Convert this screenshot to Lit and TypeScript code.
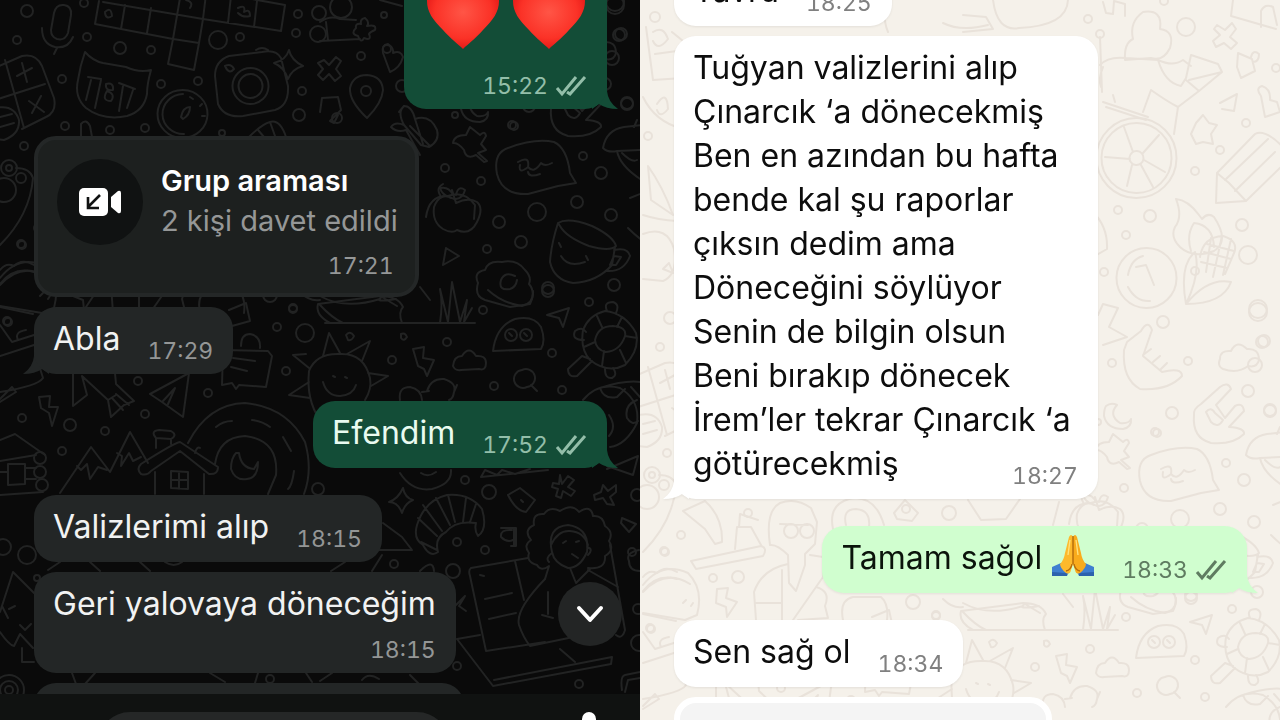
import { LitElement, html, svg, css } from "lit";
import { customElement, property } from "lit/decorators.js";

/* Small rings scattered over the wallpaper: x, y, radius */
const RINGS: number[][] = [
  [27, 11, 6], [84, 3, 4], [87, 37, 4], [17, 40, 4], [120, 48, 6], [151, 50, 4], [218, 40, 9], [240, 37, 4],
  [298, 14, 4], [296, 33, 4], [319, 13, 7], [318, 34, 8], [62, 79, 4], [161, 84, 4], [198, 81, 4], [302, 91, 4],
  [299, 115, 6], [65, 126, 4], [110, 130, 4], [145, 128, 4], [24, 146, 4], [222, 133, 3], [22, 245, 4],
  [9, 168, 8], [9, 168, 3], [21, 178, 5], [4, 190, 12], [341, 7, 11], [384, 15, 3], [361, 56, 4], [366, 91, 5],
  [387, 49, 4], [337, 118, 5], [445, 168, 4], [481, 181, 4], [499, 222, 6], [521, 242, 6], [487, 249, 4],
  [514, 126, 4], [455, 115, 3], [583, 156, 4], [601, 173, 6], [577, 202, 6], [611, 215, 6], [614, 285, 6],
  [548, 288, 6], [537, 212, 9], [621, 34, 6], [627, 104, 6], [612, 58, 7], [615, 5, 9], [402, 86, 6],
  [70, 425, 6], [105, 431, 4], [62, 451, 4], [145, 414, 4], [138, 381, 4], [208, 393, 4], [286, 371, 4],
  [277, 327, 4], [293, 309, 4], [305, 333, 9], [22, 418, 4], [8, 322, 4], [40, 458, 6], [40, 472, 6], [42, 485, 6],
  [318, 489, 6], [392, 360, 4], [447, 342, 4], [483, 310, 4], [589, 302, 4], [552, 353, 4], [494, 386, 4],
  [562, 390, 4], [548, 291, 6], [465, 480, 4], [489, 492, 7], [637, 495, 6], [511, 335, 6], [526, 335, 6],
  [27, 555, 9], [3, 547, 8], [457, 542, 4], [485, 550, 4], [453, 571, 7], [394, 564, 4], [457, 666, 4],
  [579, 684, 4], [638, 609, 5], [639, 643, 8], [9, 690, 9], [9, 690, 15], [9, 690, 4], [270, 679, 4],
  [632, 552, 4], [37, 578, 3],
  [445, -288, 4], [457, -273, 4], [521, -306, 4], [543, -280, 9], [633, -239, 4], [603, -184, 4],
  [577, -157, 4], [552, -136, 4], [475, -97, 4], [507, -91, 6], [483, -72, 4], [599, -82, 6], [605, -52, 9],
  [552, -36, 4], [461, -35, 4], [615, 2, 9], [520, 15, 6], [619, 35, 6], [469, 56, 4], [545, 54, 4],
  [605, 84, 6], [627, 103, 6], [529, 106, 6], [512, 125, 4], [38, 228, 4], [21, 244, 4], [70, 271, 4],
  [95, 270, 6], [105, 206, 4], [270, 295, 7], [293, 308, 4], [306, 206, 7], [263, 202, 4], [12, -290, 5],
  [5, -171, 4], [7, 321, 4],
];

/* Hand-drawn doodles of the wallpaper */
const DOODLES: string[] = [
  // microphone
  "M54 13Q56 4 64 5Q72 6 71 15L68 33Q65 41 57 39Q51 37 51 30ZM42 28Q42 44 55 47Q68 49 73 37M57 48L54 54",
  // word tiles
  "M99 1L95 24L173 39L168 64L194 70L199 43L203 19L281 31L285 5L230 -5M103 2L203 19M125 5L121 29M151 8L147 33M180 -2L173 39L199 43M206 -6L203 19M231 -4L228 23M257 1L254 27M105 12Q111 6 112 16Q106 20 105 13M186 0Q194 2 190 8M238 8Q246 4 244 12Q250 8 250 16Q243 18 238 13",
  // calculator
  "M-10 70L22 56Q36 53 42 66L54 98Q57 112 46 117L22 129M5 60L24 128M-5 100L45 84M17 76L32 68M22 63L27 82M29 101L44 112M41 96L32 113M-4 108Q14 104 19 120Q20 134 4 140L-6 139M0 117L12 114M0 127L14 123",
  // cat face
  "M78 80Q80 66 85 52Q93 61 103 63L126 67Q139 73 151 70Q147 84 147 94Q144 111 127 116Q103 121 86 108Q74 97 78 80M88 77L101 79M91 80L86 100M101 80L95 108M106 84Q114 82 113 90Q105 91 106 84M107 91Q101 101 111 101Q116 94 107 91M119 83L135 89M123 86L119 111M133 90L127 108",
  // stopwatch
  "M183 90A25 24 0 1 1 182 138A25 24 0 1 1 183 90M183 94A21 20 0 1 0 184 134M181 117Q183 107 190 107Q190 115 183 119ZM190 97L193 99M200 106L202 104M202 116H205",
  // camera and sparkle
  "M215 76Q215 61 229 56L262 52Q276 49 281 58L288 86Q289 106 275 110L243 116Q224 118 218 104ZM251 68A18 18 0 1 1 250 104A18 18 0 1 1 251 68M251 74A12 12 0 1 1 250 98A12 12 0 1 1 251 74M256 50Q262 46 268 50M225 66Q231 63 234 69Q229 75 225 66M289 50Q291 60 303 66Q292 69 288 79Q284 67 274 63Q286 60 289 50",
  "M81 137V124Q86 118 90 126L92 137M249 137Q262 124 270 122Q280 119 286 137M270 122L275 136M258 130L264 137",
  // pencil stroke on the left edge
  "M16 168Q30 168 33 178Q30 215 0 245M0 270Q6 262 14 266Q22 258 34 265M0 284Q14 266 34 272",
  // bouquet and cross
  "M320 22Q330 15 340 19L356 20M320 41L360 39M326 22L328 40M365 18Q370 22 367 26Q377 24 375 30Q370 32 369 34Q372 41 364 38Q361 44 358 36Q350 34 356 28Q355 23 361 24Q360 19 365 18M380 0L402 6M324 60L329 65L336 57L341 61L336 69L341 76L335 81L329 74L323 80L318 75L323 69L318 63Z",
  // location pin and note
  "M367 118Q349 101 350 88Q353 75 367 75Q382 76 383 90Q382 103 367 118M322 98L338 97L341 110L330 121L334 123L338 115M322 98L320 112",
  "M383 53Q381 45 388 44Q394 48 393 53Q401 50 403 57Q400 68 390 72Z",
  // butterfly
  "M404 125Q397 112 404 106Q412 106 415 119Q430 114 437 130Q440 141 429 147L421 145L404 125Q395 121 391 127Q397 133 406 130L420 155M415 119L423 144M410 126L430 146M404 106L399 112",
  // push pin
  "M470 127L480 135Q485 130 486 136L481 144L486 150L478 153L487 161L484 162L476 155Q466 160 464 150Q458 142 453 143Q454 135 466 135Z",
  // speech bubble
  "M508 148Q535 138 554 142Q567 148 570 173L576 183L558 186L528 194Q502 195 497 174Q493 153 508 148M518 162Q530 155 528 167Q518 175 520 165M528 167Q534 174 541 163Q545 167 552 163M528 172Q529 178 540 174",
  // apple
  "M454 199Q440 191 434 207Q432 222 443 229Q452 234 457 230Q470 236 477 222Q484 208 477 202Q468 197 456 203L452 190M451 198Q442 195 440 188Q449 186 453 195M456 195Q458 185 465 190Q463 198 456 199",
  // smiling cup
  "M558 223Q551 245 550 262Q554 280 573 283Q597 282 612 265L615 247M558 223Q568 217 592 226Q613 236 616 246Q610 252 589 246Q566 237 560 226ZM614 250Q628 247 630 256Q624 272 607 271M614 256L621 257L616 265L610 265ZM559 243L561 247M586 256L588 260M561 256Q568 268 585 262",
  // cloud letter
  "M478 283Q473 272 485 270Q488 260 502 262Q517 259 525 270Q532 277 529 284Q536 292 530 304L510 307L485 300Q474 296 478 283M515 276Q505 271 501 280Q498 291 510 289Q516 287 517 280",
  "M446 248L459 256L443 265Z",
  // rock hand
  "M551 108Q549 131 568 136Q590 138 601 127Q602 121 586 120L601 104Q600 95 592 99L582 111L573 98L588 82Q585 74 577 80L558 97Q550 102 551 108M563 105Q568 99 572 106L580 113Q575 122 568 115Z",
  "M463 99Q468 95 474 98Q465 108 477 116Q486 117 488 112Q489 120 480 122Q464 122 461 109Q461 102 463 99",
  // umbrella
  "M603 148Q606 130 624 127L650 124M603 148Q608 153 617 151L660 149M617 151Q620 167 645 182M634 127L637 120M622 153Q632 163 637 160M628 228Q640 240 650 245M630 198L650 190",
  // shrubs and horizon
  "M320 296Q345 310 380 299M397 306L382 297Q372 303 396 299M325 323H475M330 323Q315 315 318 304L380 296Q398 296 403 307Q398 312 402 323M320 305Q332 318 343 323M440 323Q443 303 440 289L448 322L452 282L460 322L467 300L464 322L472 308M420 287L430 300",
  // airplane on the left
  "M0 307L33 314M0 356L34 345M0 325L12 342L34 335M18 340Q14 332 26 330M0 392Q38 386 43 378L38 362M0 399L12 387L16 392L0 402M229 310L246 303L250 321L232 326",
  // rocket
  "M73 373V406L87 395L82 376L108 400L111 417L124 405L134 401L116 384L115 373M108 400L116 395M112 398L123 410M116 394L129 405",
  "M39 397L50 396L49 407H58L52 426L49 413L41 408Z",
  // paper plane
  "M189 373L150 394L162 402L183 417L189 373M163 401L175 388L168 404",
  // note
  "M222 385L223 350L268 351L272 356L266 387L239 385L236 389L232 383ZM241 346Q241 334 250 334Q261 336 260 348M233 358L255 361M231 367L247 371",
  // sun
  "M320 420Q306 400 309 371Q316 353 340 354Q364 353 370 378Q372 389 365 400M323 356L329 333L340 353M347 354L370 341L362 361M368 373L388 376L371 386M306 354L293 355L309 368M309 382L289 395L310 398M333 376L335 377M345 377L347 378M323 382Q327 396 340 396Q353 395 356 385",
  "M413 349L424 347L423 358L434 360L427 376L424 369L418 366Z",
  "M453 366Q454 356 462 356Q469 345 476 356Q486 355 486 363Q486 371 479 369L461 370Q455 371 453 366",
  "M400 400Q398 387 410 387Q421 389 422 400M427 391Q431 378 444 379Q457 383 454 392L457 385M454 392Q453 399 449 400M422 392L429 391",
  "M346 335Q350 330 354 336Q352 341 348 340ZM401 334Q405 332 407 337Q404 342 401 338Z",
  // small ghost
  "M493 351Q496 326 515 319Q534 315 541 327Q546 341 541 349ZM509 333L512 336M524 333L527 336",
  "M569 308L563 327L559 318L547 315Z",
  "M522 370A9 9 0 1 1 527 387A9 9 0 1 1 522 370M531 385L537 391M488 290Q502 303 522 306Q534 303 533 291",
  // turtle
  "M583 330Q589 315 605 311Q625 313 636 333Q640 350 625 365Q608 374 590 360Q580 349 583 330M595 340Q598 326 613 326Q627 327 625 336Q620 351 606 352Q596 350 595 340M602 327L597 316M617 327L622 317M625 336L637 338M595 342L584 347M604 351L602 366M620 350L626 363M607 311Q603 302 613 302Q620 304 616 313M584 340Q571 340 575 331Q582 326 586 332M590 359L582 356L568 369Q568 378 577 376L592 361M605 369Q605 379 612 378Q618 375 613 368",
  // globe
  "M583 400Q598 382 620 388Q640 400 637 423Q626 445 610 447M600 388Q604 400 617 397L625 389M637 400Q624 405 627 418Q632 426 638 421M609 415Q617 427 609 436M600 388Q625 380 640 382M631 387L640 397",
  "M607 469L638 456L633 475L607 466M481 477L485 470L497 475L502 470L515 474L530 469M481 477L548 470M400 473Q412 492 432 489Q452 484 451 470M421 473Q428 478 436 472",
  // mountains, hut and swirl
  "M60 493L91 447L110 472L130 432L148 463M77 466L81 470L87 464L90 479L98 467L107 470M117 453L122 456L121 466L129 453L133 461L141 457",
  "M141 464Q136 469 141 474Q147 476 151 471L180 451L209 474Q218 475 218 467L180 442Q174 443 141 464M155 472V494M204 474V494M171 471L188 472L188 489L171 488ZM179 472V489M171 480H188M156 448V438Q150 431 159 430L171 431Q178 435 171 439V444M156 438L171 439",
  "M188 443Q208 404 245 403Q287 407 305 442Q313 470 304 494M215 464Q219 437 245 436Q279 440 276 475L268 494M200 448Q197 446 195 453M216 427Q223 421 232 421M252 420Q262 421 270 427M283 437L291 451M294 471Q292 486 288 489M236 453Q231 458 231 469Q235 481 247 479Q258 478 258 462L254 469Q241 468 239 453Z",
  "M0 440L15 434L45 455M0 461L36 455M0 495L43 492M8 464H25V484L8 485ZM0 472H8M25 468H36M25 479H36",
  // sparkle, croissant, pilcrow
  "M403 488Q405 498 413 500Q405 503 402 513Q398 502 389 502Q398 499 403 488",
  "M423 545Q413 539 417 525Q425 500 447 495Q470 493 482 509Q488 529 478 536Q474 530 476 523Q455 520 446 532Q434 538 438 552Q430 558 423 545M423 505L442 531M436 498L450 525M448 495L455 522M466 498L463 522M476 504L470 522M418 518L437 536M421 542L437 550",
  "M514 528V546M512 530Q500 529 501 537Q507 543 513 540M501 528H516V546H511",
  "M508 495L520 488L535 500L526 512Q516 511 508 495M521 500L523 502",
  "M560 475L562 484L568 476L574 480L568 487L575 491L571 496L563 491L561 498L556 496L558 489L552 487L553 483L559 484ZM603 485L608 491L616 485L616 492L610 497L614 505L607 504L603 498L595 500L594 495L601 492Z",
  // woman with curly hair at a laptop
  "M537 565Q526 562 529 553Q523 545 531 540Q523 530 534 525Q532 513 544 514Q550 506 560 511Q572 503 579 512Q591 504 593 516Q603 515 605 526Q614 532 609 541Q615 550 605 556Q606 570 588 568M537 565Q541 572 549 566L545 579M552 552Q546 527 568 525Q590 528 587 552Q580 568 568 568Q554 563 552 552M551 545Q558 530 570 531Q584 532 588 545M587 547Q594 549 588 555M552 553Q545 558 549 562M563 543L566 541M576 542L579 541M572 554L578 558",
  "M471 568Q468 570 470 576L486 651L545 642M471 568L528 558M515 561L524 600M485 599L512 593M489 619L516 613M480 575L484 576M545 579Q515 610 519 625Q523 637 530 646L583 635L574 625M570 568L576 583L590 569M548 592L548 614M553 618L542 615M588 570L618 587M610 545L625 630Q622 640 616 635M457 639L493 686L611 664L612 657L494 680M457 639L480 635M560 649L575 662M490 682L493 686",
  "M383 523L402 537L412 550L378 550M331 571L345 562M372 571L382 555M420 571Q433 558 434 571M451 610L465 596L459 606L466 611",
  "M639 550Q625 553 629 561Q629 571 640 571M622 518L636 524L629 532L621 523ZM622 690Q620 676 625 675L640 672M625 692L628 680L640 678",
  // pine tree
  "M0 612L13 572L34 593M2 606L8 618M9 609L15 606M20 625L25 630L31 624M0 632Q9 645 14 646L20 634L33 648M22 648V662H34M72 673L76 684M95 673L85 684M210 673L225 682M258 673L255 683M306 673L312 682M320 681L332 673M362 680Q368 672 379 679M410 675L425 690M48 570L60 562M90 562L100 571M140 562L150 571M165 562Q174 568 182 562",
  // rider on a wheel
  "M494 -189A40 40 0 1 1 493 -109A40 40 0 1 1 494 -189M494 -184A35 35 0 1 1 493 -114A35 35 0 1 1 494 -184M494 -156A7 7 0 1 1 493 -142A7 7 0 1 1 494 -156M490 -155L481 -180M500 -154L516 -172M501 -147L522 -135M489 -142L484 -121M487 -148L462 -150M498 -142L510 -120",
  "M457 -242Q465 -251 483 -249L515 -247Q530 -240 540 -247L548 -241M515 -247Q522 -224 538 -221L543 -229L548 -252L575 -243L579 -235L546 -227M543 -227L556 -216L579 -235M500 -195L508 -217Q525 -205 535 -200L531 -173M535 -200L556 -216M460 -205L505 -190M463 -200L503 -187M482 -247Q481 -264 490 -268Q486 -285 500 -295Q520 -298 517 -278Q532 -276 527 -259Q520 -245 508 -249Z",
  "M457 -270L459 -215M460 -240Q455 -228 458 -220M470 -212L472 -205",
  "M574 -282L582 -277L589 -284L593 -278L587 -270L594 -264L588 -258L581 -264L573 -260L570 -266L577 -272L571 -278ZM595 -254L609 -248L612 -236L598 -229L594 -240ZM608 -250Q610 -258 616 -253Q616 -245 610 -245",
  "M590 -307L588 -291L633 -278M618 -280V-296Q622 -304 630 -300L634 -282M577 -204L594 -213L591 -196L579 -198M618 -211Q612 -219 619 -221Q628 -218 627 -207L634 -205L637 -195L622 -190Z",
  "M553 -184L560 -192L566 -184L574 -182L568 -173L570 -163L560 -165L553 -163L548 -173Z",
  // pencil
  "M574 -134L612 -173Q622 -179 642 -158M574 -134L573 -104L603 -106L642 -144M574 -134L586 -124L603 -106M582 -127L625 -168M592 -116L632 -155",
  // flame
  "M532 -80Q540 -90 533 -108Q545 -107 556 -92L559 -88Q565 -95 571 -90Q587 -66 571 -56Q550 -48 537 -60Q527 -70 532 -80M548 -56Q543 -72 551 -84Q570 -82 571 -60",
  "M504 -59A30 30 0 1 1 503 1A30 30 0 1 1 504 -59M485 -32Q488 -48 500 -51M493 -40L503 -42L511 -22M485 -20Q493 -5 507 -6",
  // corn
  "M543 -3Q536 -42 552 -55Q558 -34 543 -3Q565 -30 588 -25Q580 -3 543 -3M557 -50Q560 -70 580 -71Q596 -66 591 -54Q586 -42 582 -33M561 -55L588 -48M564 -63L591 -56M568 -69L563 -35M579 -71L570 -30M588 -68L580 -32M558 -45L584 -39",
  "M481 43Q479 72 497 82Q525 84 539 69Q539 60 519 65L500 49L509 23Q505 12 498 24L484 35ZM500 48L508 42M510 55L517 49M517 63L524 56",
  "M577 52Q577 43 588 44Q594 32 604 42Q616 41 616 53Q614 61 605 59Q595 67 580 62Q574 59 577 52M450 -95Q465 -80 464 -58L450 -50M455 8L460 -3L475 1L466 20L484 30L460 38",
  // toothbrush, tube and person
  "M40 204L62 194Q80 210 79 235L72 237L62 222ZM48 254L118 239Q125 241 120 249L53 262ZM92 242L94 220L108 220L118 238M96 220L97 207L115 213",
  "M127 238Q122 204 137 196Q153 190 168 201L174 215L172 237L162 247V258L153 284L146 276L145 248Q134 237 127 238M137 217L165 218M148 217A7 7 0 1 1 148 231A7 7 0 1 1 148 217M164 217A7 7 0 1 1 164 231A7 7 0 1 1 164 217M145 257Q119 262 111 285L113 313M139 263V313M113 296H138M167 248L180 250V270L150 313M173 280Q188 284 182 299L185 311L155 313",
  "M74 282L85 281L83 291L94 295L84 310L83 300L73 296Z",
  "M0 278Q19 254 45 266Q61 282 54 308L42 313L0 306M0 285Q22 261 47 277M40 296L43 293M48 299L50 296M200 313Q196 293 210 290H238Q246 297 244 313",
  "M190 222Q185 198 206 192Q232 187 241 218M203 218Q199 202 213 202Q228 203 226 220M251 206L262 193L275 206L269 214L254 212ZM300 292Q310 302 320 300M325 193L338 213L363 212L377 192M410 218L416 195M426 217Q429 195 448 196Q464 190 475 205L474 219M440 195Q436 188 443 184",
  // stationery on the left edge
  "M3 -280L10 -227L40 -229M12 -253L34 -256M10 -275Q20 -282 25 -268Q15 -255 10 -266M29 -275L40 -266M0 -210Q12 -185 40 -178M14 -203Q24 -218 25 -198Q17 -188 14 -197M5 -141Q20 -120 30 -92L8 -107ZM0 -92Q15 -87 34 -86M0 -73Q24 -82 31 -58Q35 -32 20 -26L0 -28M20 -38L26 -44L30 -34Z",
  "M242 -307Q240 -286 245 -275M300 -284Q318 -275 345 -282M350 -307Q354 -275 376 -279Q424 -281 425 -307M320 -275L350 -278L343 -290L320 -292",
  "M460 -305L463 -294L470 -293L471 -306L482 -303V-291",
];

const wallpaper = (dx: number, dy: number) => html`
  <svg class="wallpaper" aria-hidden="true">
    <g transform="translate(${dx} ${dy})">
      ${RINGS.map(([x, y, r]) => svg`<circle cx=${x} cy=${y} r=${r}></circle>`)}
      ${DOODLES.map((d) => svg`<path d=${d}></path>`)}
    </g>
  </svg>
`;

const heart = html`
  <svg class="heart" viewBox="0 0 74 68" role="img" aria-label="❤️">
    <defs>
      <radialGradient id="h" cx="0.5" cy="0.45" r="0.6">
        <stop offset="0" stop-color="#ff5546"></stop>
        <stop offset="0.65" stop-color="#fb3227"></stop>
        <stop offset="1" stop-color="#e01313"></stop>
      </radialGradient>
    </defs>
    <path fill="url(#h)" d="M37 68C32 63 25 58 17 49C7 39 1 31 1 20C1 8 9 1 19 1C28 1 34 6 37 12C40 6 46 1 55 1C65 1 73 8 73 20C73 31 67 39 57 49C49 58 42 63 37 68Z"></path>
  </svg>
`;

const pray = html`
  <svg class="pray" viewBox="0 0 44 44" role="img" aria-label="🙏">
    <path fill="#3f7fd0" d="M1 34L10 30L19 37L16 43H1Z"></path>
    <path fill="#3f7fd0" d="M43 34L34 30L25 37L28 43H43Z"></path>
    <path fill="#2c62ad" d="M1 39L16 40V43H1ZM43 39L28 40V43H43Z"></path>
    <path fill="#fdb92c" d="M22 4Q20 0 18 4L14 20Q13 27 9 31Q9 35 15 40Q19 42 20 37L22 31Z"></path>
    <path fill="#f9ab1c" d="M22 4Q24 0 26 4L30 20Q31 27 35 31Q35 35 29 40Q25 42 24 37L22 31Z"></path>
    <path fill="none" stroke="#b36b0c" stroke-width="1.4" d="M22 3V31M21 31Q20 37 15 38M23 31Q24 37 29 38"></path>
    <path fill="none" stroke="#ffe07a" stroke-width="1.4" d="M19 7L17 22M25 7L27 22"></path>
  </svg>
`;

const ticks = html`
  <svg class="ticks" viewBox="0 0 32 22" aria-label="✓✓" role="img">
    <path d="M2 13L7 19L21 2M12 17L15 19L30 2"></path>
  </svg>
`;

@customElement("chat-bubble")
class ChatBubble extends LitElement {
  @property() time = "";
  @property() flow = "inline";
  @property({ type: Boolean }) tail = false;
  @property({ type: Boolean }) sent = false;

  static styles = css`
    :host {
      display: block;
      position: relative;
      max-width: 90%;
      color: var(--ink);
      filter: var(--lift, none);
    }
    .bubble {
      position: relative;
      display: flex;
      align-items: flex-end;
      gap: 10px 27px;
      padding: 10px 20px 13px 19px;
      border-radius: 22px;
      background: var(--fill);
      font-size: 32px;
      line-height: 44px;
      white-space: nowrap;
    }
    .overlay {
      display: grid;
    }
    .overlay ::slotted(*),
    .overlay .meta {
      grid-area: 1 / 1;
    }
    .overlay ::slotted(*) {
      padding-right: 7px;
    }
    .below {
      flex-direction: column;
      align-items: flex-start;
    }
    .meta {
      display: flex;
      align-items: center;
      align-self: flex-end;
      justify-self: end;
      gap: 7px;
      margin-bottom: -4px;
      font-size: 23px;
      line-height: 28px;
      font-variant-numeric: tabular-nums;
      color: var(--muted);
    }
    .tail {
      position: absolute;
      bottom: 0;
      width: 26px;
      height: 22px;
      fill: var(--fill);
    }
    .left {
      left: -11px;
    }
    .right {
      right: -11px;
      transform: scaleX(-1);
    }
    .ticks {
      width: 32px;
      height: 22px;
      fill: none;
      stroke: currentColor;
      stroke-width: 3;
    }
  `;

  render() {
    return html`
      ${this.tail
        ? html`<svg class="tail ${this.sent ? "right" : "left"}" viewBox="0 0 26 22">
            <path d="M11 0V4Q10 15 0 22Q12 22 19 17L26 22V0Z"></path>
          </svg>`
        : null}
      <div class="bubble ${this.flow}">
        <slot></slot>
        <span class="meta"><time>${this.time}</time>${this.sent ? ticks : null}</span>
      </div>
    `;
  }
}

@customElement("app-root")
class AppRoot extends LitElement {
  static styles = css`
    :host {
      display: flex;
      height: 100vh;
      overflow: hidden;
      font-family: Inter, "Liberation Sans", sans-serif;
    }
    .panel {
      position: relative;
      flex: 1 1 0;
      min-width: 0;
      display: flex;
      flex-direction: column;
      overflow: hidden;
      isolation: isolate;
    }
    .dark {
      --doodle: #222323;
      background: #0a0a0a;
    }
    .light {
      --doodle: #e9e2da;
      background: #f5f1ea;
    }
    .wallpaper {
      position: absolute;
      inset: 0;
      z-index: -1;
      width: 100%;
      height: 100%;
      fill: none;
      stroke: var(--doodle);
      stroke-width: 2;
      stroke-linejoin: round;
      stroke-linecap: round;
    }
    .thread {
      flex: 1 1 0;
      min-height: 0;
      display: flex;
      flex-direction: column;
      align-items: flex-start;
      gap: 10px;
      padding: 0 33px 0 34px;
      overflow: hidden;
    }
    .thread > * {
      flex: none;
    }
    .thread > :first-child {
      margin-top: -41px;
    }
    .out {
      align-self: flex-end;
    }
    .turn {
      margin-top: 17px;
    }
    .in-dark {
      --fill: #232626;
      --ink: #f1f2f2;
      --muted: #949696;
    }
    .out-dark {
      --fill: #134d37;
      --ink: #e9fbf0;
      --muted: #93bea9;
    }
    .in-light {
      --fill: #ffffff;
      --ink: #0d0d0d;
      --muted: #808080;
    }
    .out-light {
      --fill: #d0fecf;
      --ink: #0b140b;
      --muted: #5f7c61;
    }
    .light .thread > * {
      --lift: drop-shadow(0 1px 1px #00000012);
    }
    .hearts {
      display: flex;
      gap: 12px;
      padding: 12px 1px 13px 3px;
    }
    .heart {
      width: 74px;
      height: 68px;
    }
    .pray {
      width: 44px;
      height: 44px;
      margin: -8px 0;
      vertical-align: baseline;
    }
    .call {
      display: grid;
      grid-template-columns: 86px auto;
      column-gap: 18px;
      box-sizing: border-box;
      padding: 19px 17px 13px 19px;
      border: 4px solid #242727;
      border-radius: 22px;
      background: #1d201f;
      color: #959797;
    }
    .disc {
      display: grid;
      place-items: center;
      width: 86px;
      height: 86px;
      border-radius: 50%;
      background: #101212;
    }
    .video {
      width: 42px;
      height: 28px;
    }
    .call-text {
      padding-top: 2px;
      font-size: 29px;
      line-height: 40px;
      white-space: nowrap;
    }
    .call h2 {
      margin: 0;
      font-size: 29px;
      font-weight: 600;
      line-height: 40px;
      color: #ffffff;
    }
    .call p {
      margin: 0;
    }
    .call time {
      grid-column: 1 / -1;
      justify-self: end;
      font-size: 23px;
      line-height: 28px;
      padding: 7px 4px 0 0;
      font-variant-numeric: tabular-nums;
    }
    .next {
      height: 80px;
      border-radius: 22px;
    }
    .next-dark {
      width: 75%;
      background: #232626;
    }
    .next-light {
      box-sizing: border-box;
      width: 66%;
      border: 6px solid #ffffff;
      background: #f4f4f4;
    }
    .to-end {
      position: absolute;
      right: 18px;
      bottom: 74px;
      display: grid;
      place-items: center;
      width: 64px;
      height: 64px;
      padding: 0;
      border: 0;
      border-radius: 50%;
      background: #232525;
    }
    .chevron {
      width: 28px;
      height: 18px;
      fill: none;
      stroke: #ffffff;
      stroke-width: 4;
      stroke-linecap: round;
      stroke-linejoin: round;
    }
    .composer {
      box-sizing: border-box;
      height: 26px;
      display: flex;
      align-items: flex-start;
      justify-content: space-between;
      padding: 18px 41px 0 98px;
      overflow: hidden;
      background: #101211;
    }
    .composer input {
      flex: none;
      box-sizing: border-box;
      width: 70%;
      height: 64px;
      padding: 0 24px;
      border: 0;
      border-radius: 32px;
      background: #252727;
      color: #ffffff;
      font: inherit;
    }
    .mic {
      flex: none;
      padding: 0;
      border: 0;
      background: none;
    }
    .mic svg {
      display: block;
      width: 20px;
      height: 30px;
    }
  `;

  render() {
    return html`
      <section class="panel dark">
        ${wallpaper(0, 0)}
        <div class="thread">
          <chat-bubble class="out out-dark" time="15:22" flow="below" tail sent>
            <span class="hearts">${heart}${heart}</span>
          </chat-bubble>
          <article class="call turn">
            <span class="disc">
              <svg class="video" viewBox="0 0 42 28">
                <rect x="0" y="0" width="29" height="28" rx="5" fill="#fff"></rect>
                <path d="M32 9L39 3Q42 2 42 5V23Q42 26 39 25L32 19Z" fill="#fff"></path>
                <path d="M21 7L9 19M9 9V20H20" fill="none" stroke="#101212" stroke-width="2.6"></path>
              </svg>
            </span>
            <div class="call-text">
              <h2>Grup araması</h2>
              <p>2 kişi davet edildi</p>
            </div>
            <time>17:21</time>
          </article>
          <chat-bubble class="in-dark" time="17:29" tail>Abla</chat-bubble>
          <chat-bubble class="out turn out-dark" time="17:52" tail sent>Efendim</chat-bubble>
          <chat-bubble class="in-dark turn" time="18:15">Valizlerimi alıp</chat-bubble>
          <chat-bubble class="in-dark" time="18:15" flow="below">Geri yalovaya döneceğim</chat-bubble>
          <div class="next next-dark"></div>
        </div>
        <button class="to-end" aria-label="En alta git">
          <svg class="chevron" viewBox="0 0 28 18"><path d="M3 3L14 15L25 3"></path></svg>
        </button>
        <footer class="composer">
          <input type="text" aria-label="Mesaj" />
          <button class="mic" aria-label="Ses kaydı">
            <svg viewBox="0 0 20 30"><rect x="3" y="0" width="14" height="28" rx="7" fill="#fff"></rect></svg>
          </button>
        </footer>
      </section>
      <section class="panel light">
        ${wallpaper(3, 307)}
        <div class="thread">
          <chat-bubble class="in-light" time="18:25">Yavru</chat-bubble>
          <chat-bubble class="in-light" time="18:27" flow="overlay" tail>
            <span>
              Tuğyan valizlerini alıp<br />Çınarcık ‘a dönecekmiş<br />Ben en azından bu hafta<br />bende kal şu raporlar<br />çıksın dedim ama<br />Döneceğini söylüyor<br />Senin de bilgin olsun<br />Beni bırakıp dönecek<br />İrem’ler tekrar Çınarcık ‘a<br />götürecekmiş
            </span>
          </chat-bubble>
          <chat-bubble class="out turn out-light" time="18:33" tail sent>
            <span>Tamam sağol ${pray}</span>
          </chat-bubble>
          <chat-bubble class="in-light turn" time="18:34">Sen sağ ol</chat-bubble>
          <div class="next next-light"></div>
        </div>
      </section>
    `;
  }
}
